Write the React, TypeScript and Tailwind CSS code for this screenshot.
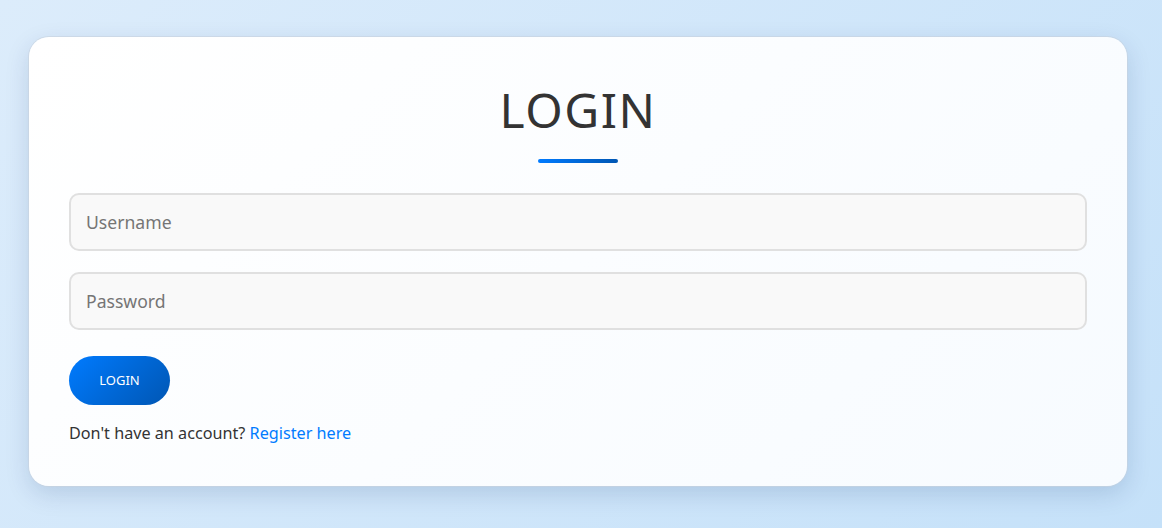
import React from "react";

export default function App() {
  return (
    <div
      className="w-[1162px] h-[528px] pt-[37px] pl-[29px] bg-[linear-gradient(135deg,#dcecfb_0%,#c5e1f9_100%)]"
      style={{ fontFamily: '"Noto Sans", "Open Sans", sans-serif' }}
    >
      <div className="w-[1098px] rounded-[20px] bg-[linear-gradient(135deg,#ffffff_0%,#f7fbff_100%)] shadow-[0_0_0_1px_rgba(200,210,222,0.6),0_8px_24px_rgba(0,40,100,0.15)] px-[40px] pt-[44px] pb-[41px]">
        <h1 className="text-center text-[48px] leading-[58px] text-[#333333] tracking-[1.5px] font-normal">LOGIN</h1>
        <div className="mx-auto mt-[20px] w-[80px] h-[4px] rounded-full bg-[linear-gradient(90deg,#007bff,#0056b3)]" />
        <div className="mt-[30px] flex flex-col gap-[21px]">
          <input
            placeholder="Username"
            className="w-full h-[58px] rounded-[10px] border-2 border-[#e0e0e0] bg-[#f9f9f9] px-[15px] text-[17.6px] text-[#333] placeholder:text-[#757575] outline-none"
          />
          <input
            placeholder="Password"
            type="password"
            className="w-full h-[58px] rounded-[10px] border-2 border-[#e0e0e0] bg-[#f9f9f9] px-[15px] text-[17.6px] text-[#333] placeholder:text-[#757575] outline-none"
          />
        </div>
        <button className="mt-[26px] w-[101px] h-[49px] rounded-full bg-[linear-gradient(135deg,#007bff,#0056b3)] text-white text-[13px]">
          LOGIN
        </button>
        <p className="mt-[16px] text-[16.2px] leading-[24px] text-[#333]">
          Don't have an account? <a className="text-[#007bff]">Register here</a>
        </p>
      </div>
    </div>
  );
}
